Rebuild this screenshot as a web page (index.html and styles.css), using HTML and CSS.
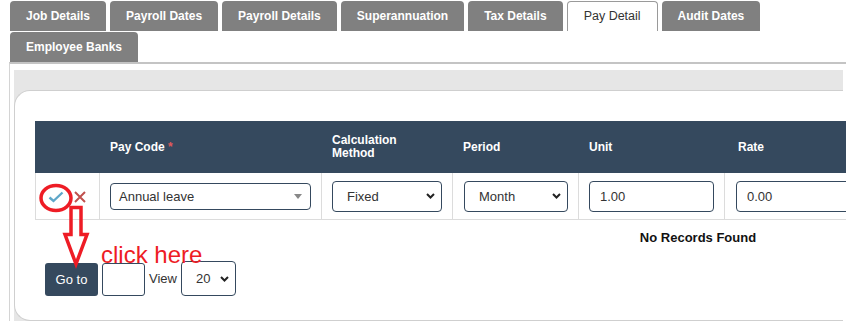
FILE: index.html
```html
<!DOCTYPE html>
<html>
  <head>
    <title>Pay Detail</title>
    <link rel="stylesheet" href="styles.css">
  </head>
  <body>
    <div class="tabs">
      <a class="tab">Job Details</a>
      <a class="tab">Payroll Dates</a>
      <a class="tab">Payroll Details</a>
      <a class="tab">Superannuation</a>
      <a class="tab">Tax Details</a>
      <a class="tab active">Pay Detail</a>
      <a class="tab">Audit Dates</a>
      <a class="tab">Employee Banks</a>
    </div>

    <div class="panel">
      <div class="well">
        <div class="card">
          <table class="grid">
            <colgroup>
              <col style="width:64px">
              <col style="width:222px">
              <col style="width:131px">
              <col style="width:126px">
              <col style="width:146px">
              <col>
            </colgroup>
            <thead>
              <tr>
                <th></th>
                <th>Pay Code <span class="req">*</span></th>
                <th>Calculation<br>Method</th>
                <th>Period</th>
                <th>Unit</th>
                <th class="last">Rate</th>
              </tr>
            </thead>
            <tbody>
              <tr>
                <td class="actions">
                  <svg class="ico-ok" width="16" height="12" viewBox="0 0 16 12"><path d="M1.5 6.5 L5.5 10 L14.5 1.5" fill="none" stroke="#5ea7c9" stroke-width="2.4"/></svg>
                  <svg class="ico-no" width="12" height="12" viewBox="0 0 12 12"><path d="M1 1 L11 11 M11 1 L1 11" fill="none" stroke="#c0504d" stroke-width="2"/></svg>
                </td>
                <td><div class="combo">Annual leave<span class="combo-arrow"></span></div></td>
                <td><select class="ctl"><option>Fixed</option></select></td>
                <td class="period"><select class="ctl"><option>Month</option></select></td>
                <td><input class="ctl" type="text" value="1.00"></td>
                <td class="last"><input class="ctl" type="text" value="0.00"></td>
              </tr>
            </tbody>
          </table>
          <div class="norec">No Records Found</div>
          <div class="pager">
            <button class="btn">Go to</button>
            <input class="page_input" type="text">
            <span class="pager_label">View</span>
            <select class="ctl page_size"><option>20</option></select>
          </div>
        </div>
      </div>
    </div>

    <!-- hand drawn annotation -->
    <svg class="note" width="120" height="90" viewBox="30 180 120 90">
      <ellipse cx="56" cy="198" rx="15" ry="12.5" fill="none" stroke="#ee1c25" stroke-width="3.5"/>
      <path d="M71 207.5 L81 207.5 L81 234.5 L87 234.5 L76 264 L65 234.5 L71 234.5 Z" fill="none" stroke="#ee1c25" stroke-width="3.5" stroke-linejoin="miter"/>
    </svg>
    <span class="note_text">click here</span>
  </body>
</html>
```
FILE: styles.css
```css
html, body { overflow: hidden; }
body { margin: 0; font-family: "Liberation Sans", Arial, sans-serif; color: #333; position: relative; height: 321px; }

.tabs { display: flex; flex-wrap: wrap; column-gap: 4px; row-gap: 1px; padding: 1px 0 0 10px; }
.tab { height: 30px; line-height: 30px; padding: 0 16px; background: #808080; color: #fff; font-size: 12px; font-weight: bold; border-radius: 4px 4px 0 0; box-sizing: border-box; }
.tab.active { background: #fff; color: #333; font-weight: normal; font-size: 12.5px; border: 1px solid #9a9a9a; border-bottom: none; line-height: 28px; padding: 0 16px; }

.panel { margin-left: 9px; border-top: 2px solid #c4c4c4; border-left: 1px solid #d4d4d4; padding: 6px 3px 0 4px; }
.well { background: #e6e6e6; padding-top: 20px; }
.card { background: #fff; border: 1px solid #cfcfcf; border-right: none; border-radius: 16px 0 0 16px; padding: 30px 0 24px 20px; }

.grid { width: 1326px; table-layout: fixed; border-collapse: separate; border-spacing: 0; }
.grid th { background: #35495e; color: #fff; font-size: 12px; font-weight: bold; text-align: left; height: 52px; padding: 0 10px 0 11px; line-height: 13px; vertical-align: middle; }
.grid th:first-child { padding: 0; }
.grid th.last { padding-left: 14px; }
.grid .req { color: #e0595b; }
.grid td { height: 46px; padding: 0 10px 0 10px; border-left: 1px solid #dcdcdc; border-bottom: 1px solid #dcdcdc; vertical-align: middle; }
.grid td.period { padding-left: 11px; }
.grid td.last { padding-left: 11px; }
.grid td.actions { padding-left: 12px; white-space: nowrap; }
.ico-ok { vertical-align: middle; }
.ico-no { vertical-align: middle; margin-left: 6px; }

.ctl { box-sizing: border-box; width: 100%; height: 31px; border: 1px solid #35495e; border-radius: 4px; background-color: #fff; font-family: "Liberation Sans", Arial, sans-serif; font-size: 13px; color: #333; padding: 0 10px; outline: none; }
select.ctl { appearance: none; -webkit-appearance: none; padding: 0 22px 0 14px; background-image: url("data:image/svg+xml,%3Csvg xmlns='http://www.w3.org/2000/svg' width='9' height='6' viewBox='0 0 9 6'%3E%3Cpath d='M1 1 L4.5 4.5 L8 1' fill='none' stroke='%23222' stroke-width='2'/%3E%3C/svg%3E"); background-repeat: no-repeat; background-position: right 6px center; }

.combo { box-sizing: border-box; height: 27px; line-height: 25px; border: 1px solid #35495e; border-radius: 4px; font-size: 13px; padding-left: 8px; position: relative; }
.combo-arrow { position: absolute; right: 8px; top: 10px; border-top: 5px solid #888; border-left: 4px solid transparent; border-right: 4px solid transparent; }

.norec { width: 1326px; text-align: center; font-size: 13px; font-weight: bold; color: #111; line-height: 16px; padding-top: 10px; }

.pager { display: flex; align-items: flex-end; gap: 4px; margin: 15px 0 0 10px; font-size: 13px; color: #333; }
.pager_label { align-self: center; }
.btn { background: #35495e; color: #fff; border: none; border-radius: 3px; height: 33px; width: 53px; font-family: "Liberation Sans", Arial, sans-serif; font-size: 13px; padding: 0; }
.page_input { box-sizing: border-box; width: 43px; height: 33px; border: 1px solid #35495e; border-radius: 3px; outline: none; }
.page_size { width: 55px; height: 35px; padding-left: 12px; }

.note { position: absolute; left: 30px; top: 180px; }
.note_text { position: absolute; left: 101px; top: 243px; color: #ee1c25; font-size: 24px; line-height: 24px; }
```
